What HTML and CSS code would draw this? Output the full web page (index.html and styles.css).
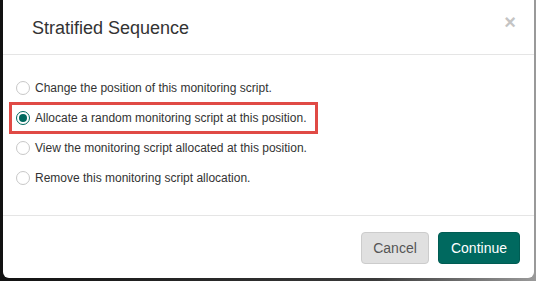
FILE: index.html
```html
<!doctype html>
<html lang="en">
<head>
<meta charset="utf-8" />
<title>Stratified Sequence</title>
<link rel="stylesheet" href="styles.css">
</head>
<body>
 <div class="modal" role="dialog" aria-labelledby="modal-title">
   <div class="modal-header">
     <h4 id="modal-title" class="modal-title">Stratified Sequence</h4>
     <button class="close" type="button" aria-label="Close">&times;</button>
   </div>
   <div class="modal-body">
     <label class="option"><input type="radio" name="action" value="move"> Change the position of this monitoring script.</label>
     <label class="option highlight"><input type="radio" name="action" value="allocate" checked> Allocate a random monitoring script at this position.</label>
     <label class="option"><input type="radio" name="action" value="view"> View the monitoring script allocated at this position.</label>
     <label class="option"><input type="radio" name="action" value="remove"> Remove this monitoring script allocation.</label>
   </div>
   <div class="modal-footer">
     <button class="btn btn-default" type="button">Cancel</button>
     <button class="btn btn-primary" type="button">Continue</button>
   </div>
 </div>
</body>
</html>
```

FILE: styles.css
```css
:root{
 --teal:#00695f;
 --text:#333;
 --line:#e5e5e5;
 --mark:#e04a45;
}
*{box-sizing:border-box;margin:0;padding:0}
html,body{height:100%}
body{
  background:linear-gradient(to right,#121212,#3a3a3a 70%,#9a9a9a);
  font-family:"Liberation Sans",Arial,sans-serif;color:var(--text);
  overflow:hidden;
}
.modal{
  margin:-6px 2px 0 3px;height:284px;
  background:#fff;border-radius:6px;
  display:flex;flex-direction:column;
}
.modal-header{
  height:61px;padding:6px 18px 0 29px;
  border-bottom:1px solid var(--line);
  display:flex;align-items:center;justify-content:space-between;
}
.modal-title{font-size:18px;font-weight:400;line-height:1;margin-top:2px}
.close{
  background:none;border:0;cursor:pointer;
  font:bold 20px/1 "Liberation Sans",Arial,sans-serif;color:#c4c4c4;
  margin-top:-10px;
}
.modal-body{
  flex:1;padding:18px 0 0 6px;
  display:flex;flex-direction:column;align-items:flex-start;
  border-bottom:1px solid var(--line);
}
.option{
  height:30px;padding:0 9px 0 4px;
  border:3px solid transparent;
  display:flex;align-items:center;gap:5px;
  font-size:12px;cursor:pointer;
}
.option.highlight{border-color:var(--mark);height:32px;margin:-1px 0}
.option input{
  appearance:none;-webkit-appearance:none;
  width:14px;height:14px;border-radius:50%;
  border:1px solid #c8c8c8;background:#fff;
  display:grid;place-content:center;margin:0;
}
.option input:checked{border:1.5px solid var(--teal)}
.option input:checked::before{
  content:"";width:8px;height:8px;border-radius:50%;background:var(--teal);
}
.modal-footer{
  height:62px;padding:16px 14px 0 0;
  display:flex;justify-content:flex-end;align-items:flex-start;gap:9px;
}
.btn{
  height:32px;border-radius:4px;font:14px "Liberation Sans",Arial,sans-serif;
  cursor:pointer;
}
.btn-default{width:68px;background:#e0e0e0;border:1px solid #ccc;color:#555}
.btn-primary{width:82px;background:var(--teal);border:1px solid #005c53;color:#fff}
```
